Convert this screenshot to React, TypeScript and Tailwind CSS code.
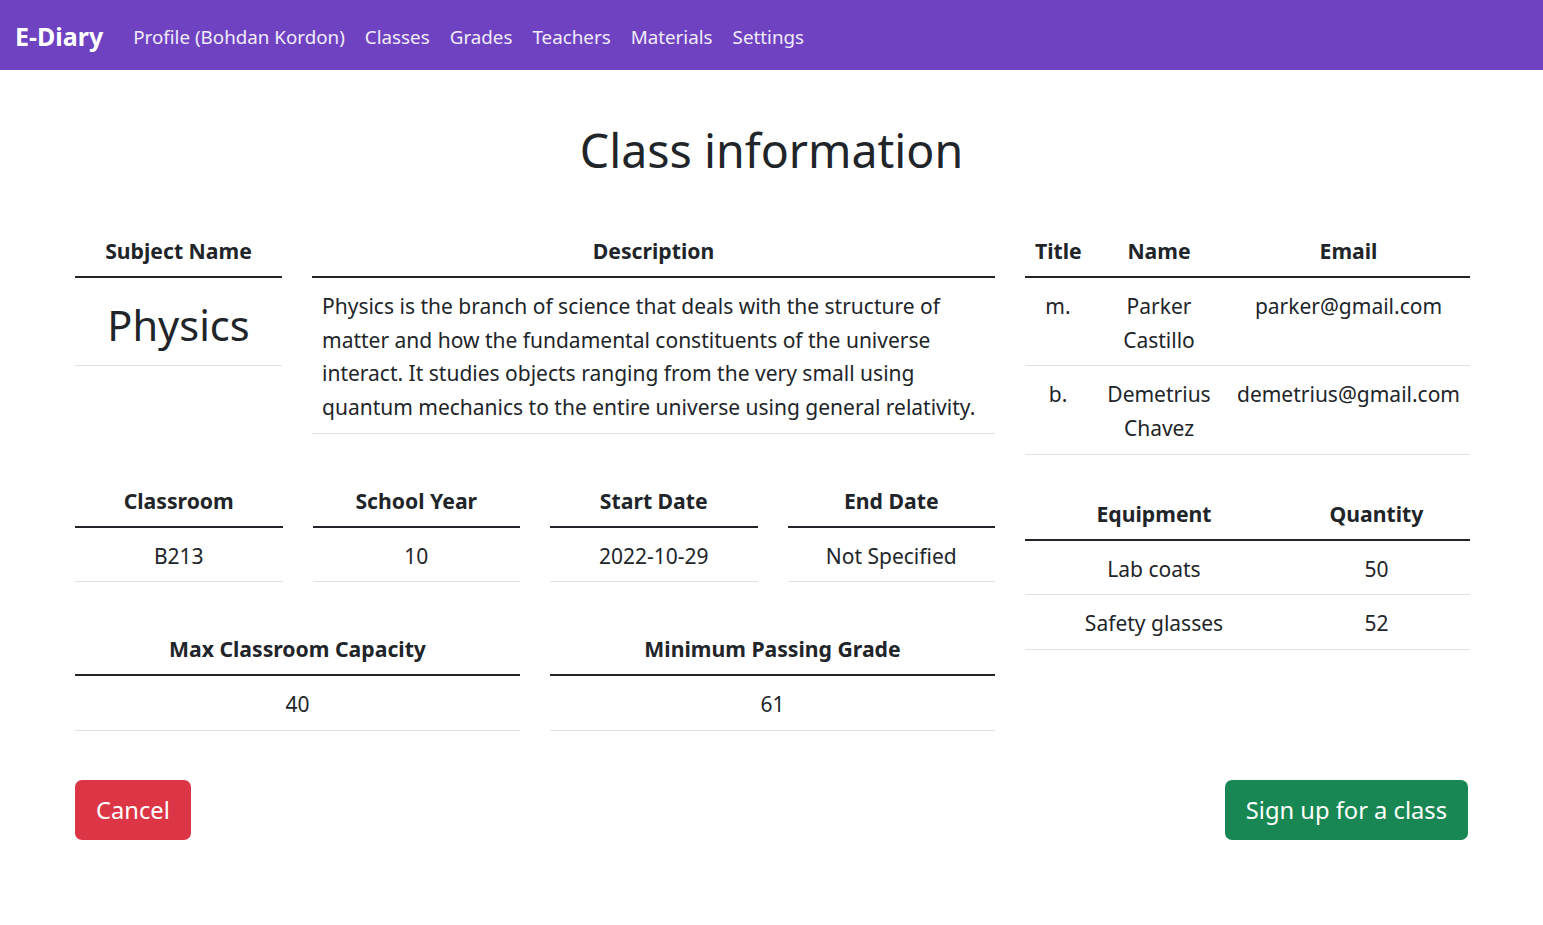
import React from 'react';

const navLinks = ['Profile (Bohdan Kordon)', 'Classes', 'Grades', 'Teachers', 'Materials', 'Settings'];

const teachers = [
  { title: 'm.', name: ['Parker', 'Castillo'], email: 'parker@gmail.com' },
  { title: 'b.', name: ['Demetrius', 'Chavez'], email: 'demetrius@gmail.com' },
];

const equipment = [
  { name: 'Lab coats', qty: 50 },
  { name: 'Safety glasses', qty: 52 },
];

// one header + one value, as the bootstrap tables in the original
function InfoBlock({ label, children, big }: { label: string; children: React.ReactNode; big?: boolean }) {
  return (
    <div className="flex flex-col">
      <div className="px-[10px] pt-[12px] pb-[8px] text-center text-[21.2px] font-bold leading-[33.75px] border-b-2 border-[#212529]">
        {label}
      </div>
      <div
        className={`px-[10px] text-center border-b border-[#dee2e6] ${
          big ? 'pt-[14px] pb-[6px] text-[41.5px] leading-[67.5px]' : 'pt-[12px] pb-[8px] leading-[33.75px]'
        }`}
      >
        {children}
      </div>
    </div>
  );
}

export default function App() {
  return (
    <div className="min-h-screen bg-white text-[21px] text-[#212529] font-['Noto_Sans',sans-serif]">
      <nav className="flex h-[70px] items-center bg-[#6f42c1] px-[15px] pt-[4px]">
        <span className="mr-[20px] text-[25px] font-bold text-white">E-Diary</span>
        {navLinks.map((link) => (
          <a key={link} href="#" className="px-[10px] text-[18.8px] leading-[30px] text-white/90">
            {link}
          </a>
        ))}
      </nav>

      <div className="px-[75px]">
        <h1 className="mt-[50px] text-center text-[46.5px] font-normal leading-[60px]">Class information</h1>

        <div className="mt-[42px] grid grid-cols-[920px_445px] gap-x-[30px]">
          {/* left column */}
          <div className="flex flex-col gap-[38px]">
            <div className="grid grid-cols-[207px_1fr] items-start gap-[30px]">
              <InfoBlock label="Subject Name" big>
                Physics
              </InfoBlock>
              <div className="flex flex-col">
                <div className="px-[10px] pt-[12px] pb-[8px] text-center text-[21.2px] font-bold leading-[33.75px] border-b-2 border-[#212529]">
                  Description
                </div>
                <div className="px-[10px] pt-[12px] pb-[8px] leading-[33.75px] border-b border-[#dee2e6]">
                  Physics is the branch of science that deals with the structure of matter and how the fundamental
                  constituents of the universe interact. It studies objects ranging from the very small using quantum
                  mechanics to the entire universe using general relativity.
                </div>
              </div>
            </div>

            <div className="grid grid-cols-4 items-start gap-[30px]">
              <InfoBlock label="Classroom">B213</InfoBlock>
              <InfoBlock label="School Year">10</InfoBlock>
              <InfoBlock label="Start Date">2022-10-29</InfoBlock>
              <InfoBlock label="End Date">Not Specified</InfoBlock>
            </div>

            <div className="grid grid-cols-2 items-start gap-[30px]">
              <InfoBlock label="Max Classroom Capacity">40</InfoBlock>
              <InfoBlock label="Minimum Passing Grade">61</InfoBlock>
            </div>
          </div>

          {/* right column */}
          <div className="flex flex-col">
            <table className="w-full table-fixed border-collapse text-center">
              <colgroup>
                <col className="w-[66px]" />
                <col className="w-[136px]" />
                <col />
              </colgroup>
              <thead>
                <tr className="border-b-2 border-[#212529] text-[21.2px]">
                  <th className="px-[10px] pt-[12px] pb-[8px] leading-[33.75px]">Title</th>
                  <th className="px-[10px] pt-[12px] pb-[8px] leading-[33.75px]">Name</th>
                  <th className="px-[10px] pt-[12px] pb-[8px] leading-[33.75px]">Email</th>
                </tr>
              </thead>
              <tbody>
                {teachers.map((t) => (
                  <tr key={t.email} className="border-b border-[#dee2e6] align-top">
                    <td className="px-[10px] pt-[12px] pb-[8px] leading-[33.75px]">{t.title}</td>
                    <td className="px-[10px] pt-[12px] pb-[8px] leading-[33.75px]">
                      {t.name[0]}
                      <br />
                      {t.name[1]}
                    </td>
                    <td className="whitespace-nowrap px-0 pt-[12px] pb-[8px] leading-[33.75px]">{t.email}</td>
                  </tr>
                ))}
              </tbody>
            </table>

            <table className="mt-[30px] w-full table-fixed border-collapse text-center">
              <colgroup>
                <col className="w-[258px]" />
                <col />
              </colgroup>
              <thead>
                <tr className="border-b-2 border-[#212529] text-[21.2px]">
                  <th className="px-[10px] pt-[12px] pb-[8px] leading-[33.75px]">Equipment</th>
                  <th className="px-[10px] pt-[12px] pb-[8px] leading-[33.75px]">Quantity</th>
                </tr>
              </thead>
              <tbody>
                {equipment.map((e) => (
                  <tr key={e.name} className="border-b border-[#dee2e6]">
                    <td className="px-[10px] pt-[12px] pb-[8px] leading-[33.75px]">{e.name}</td>
                    <td className="px-[10px] pt-[12px] pb-[8px] leading-[33.75px]">{e.qty}</td>
                  </tr>
                ))}
              </tbody>
            </table>
          </div>
        </div>

        <div className="mt-[49px] flex justify-between">
          <button className="h-[60px] rounded-[7px] bg-[#dc3545] px-[21px] pt-[3px] text-[23.7px] text-white">
            Cancel
          </button>
          <button className="h-[60px] rounded-[7px] bg-[#198754] px-[21px] pt-[3px] text-[23.7px] text-white">
            Sign up for a class
          </button>
        </div>
      </div>
    </div>
  );
}
